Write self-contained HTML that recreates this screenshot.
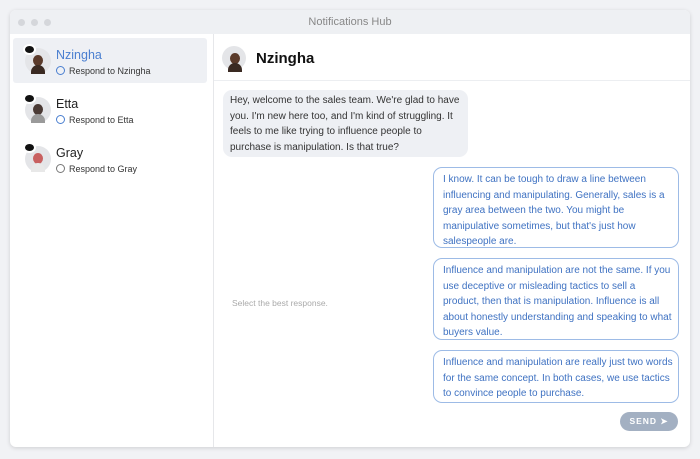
<html><head><style>
body{margin:0;width:700px;height:459px;background:#f1f2f5;font-family:"Liberation Sans",sans-serif;position:relative;overflow:hidden}
.win{position:absolute;left:10px;top:10px;width:680px;height:437px;background:#fff;border-radius:6px;box-shadow:0 1px 4px rgba(0,0,0,.15);overflow:hidden}
.tb{height:24px;background:#eef0f3;text-align:center;font-size:11px;color:#888;line-height:24px;position:relative}
.dot{position:absolute;top:9px;width:7px;height:7px;border-radius:50%;background:#d5d7db}
.side{position:absolute;left:0;top:24px;width:203px;bottom:0;border-right:1px solid #e6e7ea}
.item{position:absolute;left:3px;width:194px;height:45px;border-radius:3px}
.av{position:absolute;left:12px;top:10px;width:26px;height:26px;border-radius:50%;background:#e4e5e8;overflow:visible}
.av i{position:absolute;left:8px;top:7px;width:10px;height:11px;border-radius:50%;background:#5a3a2a}
.av b{position:absolute;left:6px;top:17px;width:14px;height:9px;border-radius:7px 7px 0 0;background:#3a2a22}
.bub{position:absolute;left:-2px;top:-4px;width:9px;height:7px;border-radius:50%;background:#111;border:2px solid #fff}
.nm{position:absolute;left:43px;top:10px;font-size:12.5px;color:#222}
.sub{position:absolute;left:43px;top:28px;font-size:9px;color:#333}
.sub span{display:inline-block;width:7px;height:7px;border:1px solid #4a7fd0;border-radius:50%;margin-right:4px;vertical-align:-1px}
.hdr{position:absolute;left:204px;top:24px;right:0;height:46px;border-bottom:1px solid #eceef1}
.msg{position:absolute;font-size:10px;line-height:15.5px;box-sizing:border-box}
.opt{position:absolute;left:423px;width:246px;border:1px solid #9dbbe6;border-radius:9px;color:#3f72c2;font-size:10px;line-height:15.5px;padding:4px 5px 3px 9px;box-sizing:border-box}
</style></head><body>
<div class="win">
<div class="tb"><div class="dot" style="left:8px"></div><div class="dot" style="left:21px"></div><div class="dot" style="left:34px"></div>Notifications Hub</div>
<div class="side">
<div class="item" style="top:4px;background:#eef0f4"><div class="av"><i></i><b></b><div class="bub"></div></div><div class="nm" style="color:#4a7fd0">Nzingha</div><div class="sub"><span></span>Respond to Nzingha</div></div>
<div class="item" style="top:53px"><div class="av"><i style="background:#4a3a35"></i><b style="background:#9a9a9a"></b><div class="bub"></div></div><div class="nm">Etta</div><div class="sub"><span></span>Respond to Etta</div></div>
<div class="item" style="top:102px"><div class="av"><i style="background:#c86060"></i><b style="background:#e8e8e8"></b><div class="bub"></div></div><div class="nm">Gray</div><div class="sub"><span style="border-color:#777"></span>Respond to Gray</div></div>
</div>
<div class="hdr"><div class="av" style="left:8px;top:12px;width:24px;height:24px"><i></i><b></b></div><div style="position:absolute;left:42px;top:16px;font-size:15px;font-weight:bold;color:#111">Nzingha</div></div>
<div class="msg" style="left:213px;top:80px;width:245px;height:67px;background:#eef0f4;border-radius:9px;padding:3px 7px;color:#333">Hey, welcome to the sales team. We're glad to have you. I'm new here too, and I'm kind of struggling. It feels to me like trying to influence people to purchase is manipulation. Is that true?</div>
<div class="opt" style="top:157px;height:81px">I know. It can be tough to draw a line between influencing and manipulating. Generally, sales is a gray area between the two. You might be manipulative sometimes, but that's just how salespeople are.</div>
<div class="opt" style="top:248px;height:82px">Influence and manipulation are not the same. If you use deceptive or misleading tactics to sell a product, then that is manipulation. Influence is all about honestly understanding and speaking to what buyers value.</div>
<div class="opt" style="top:340px;height:53px">Influence and manipulation are really just two words for the same concept. In both cases, we use tactics to convince people to purchase.</div>
<div style="position:absolute;left:222px;top:288px;font-size:8.5px;color:#aaa">Select the best response.</div>
<div style="position:absolute;left:610px;top:402px;width:58px;height:19px;border-radius:10px;background:#a3b0c2;color:#fff;font-size:8.5px;font-weight:bold;letter-spacing:1px;text-align:center;line-height:19px">SEND ➤</div>
</div>
</body></html>
